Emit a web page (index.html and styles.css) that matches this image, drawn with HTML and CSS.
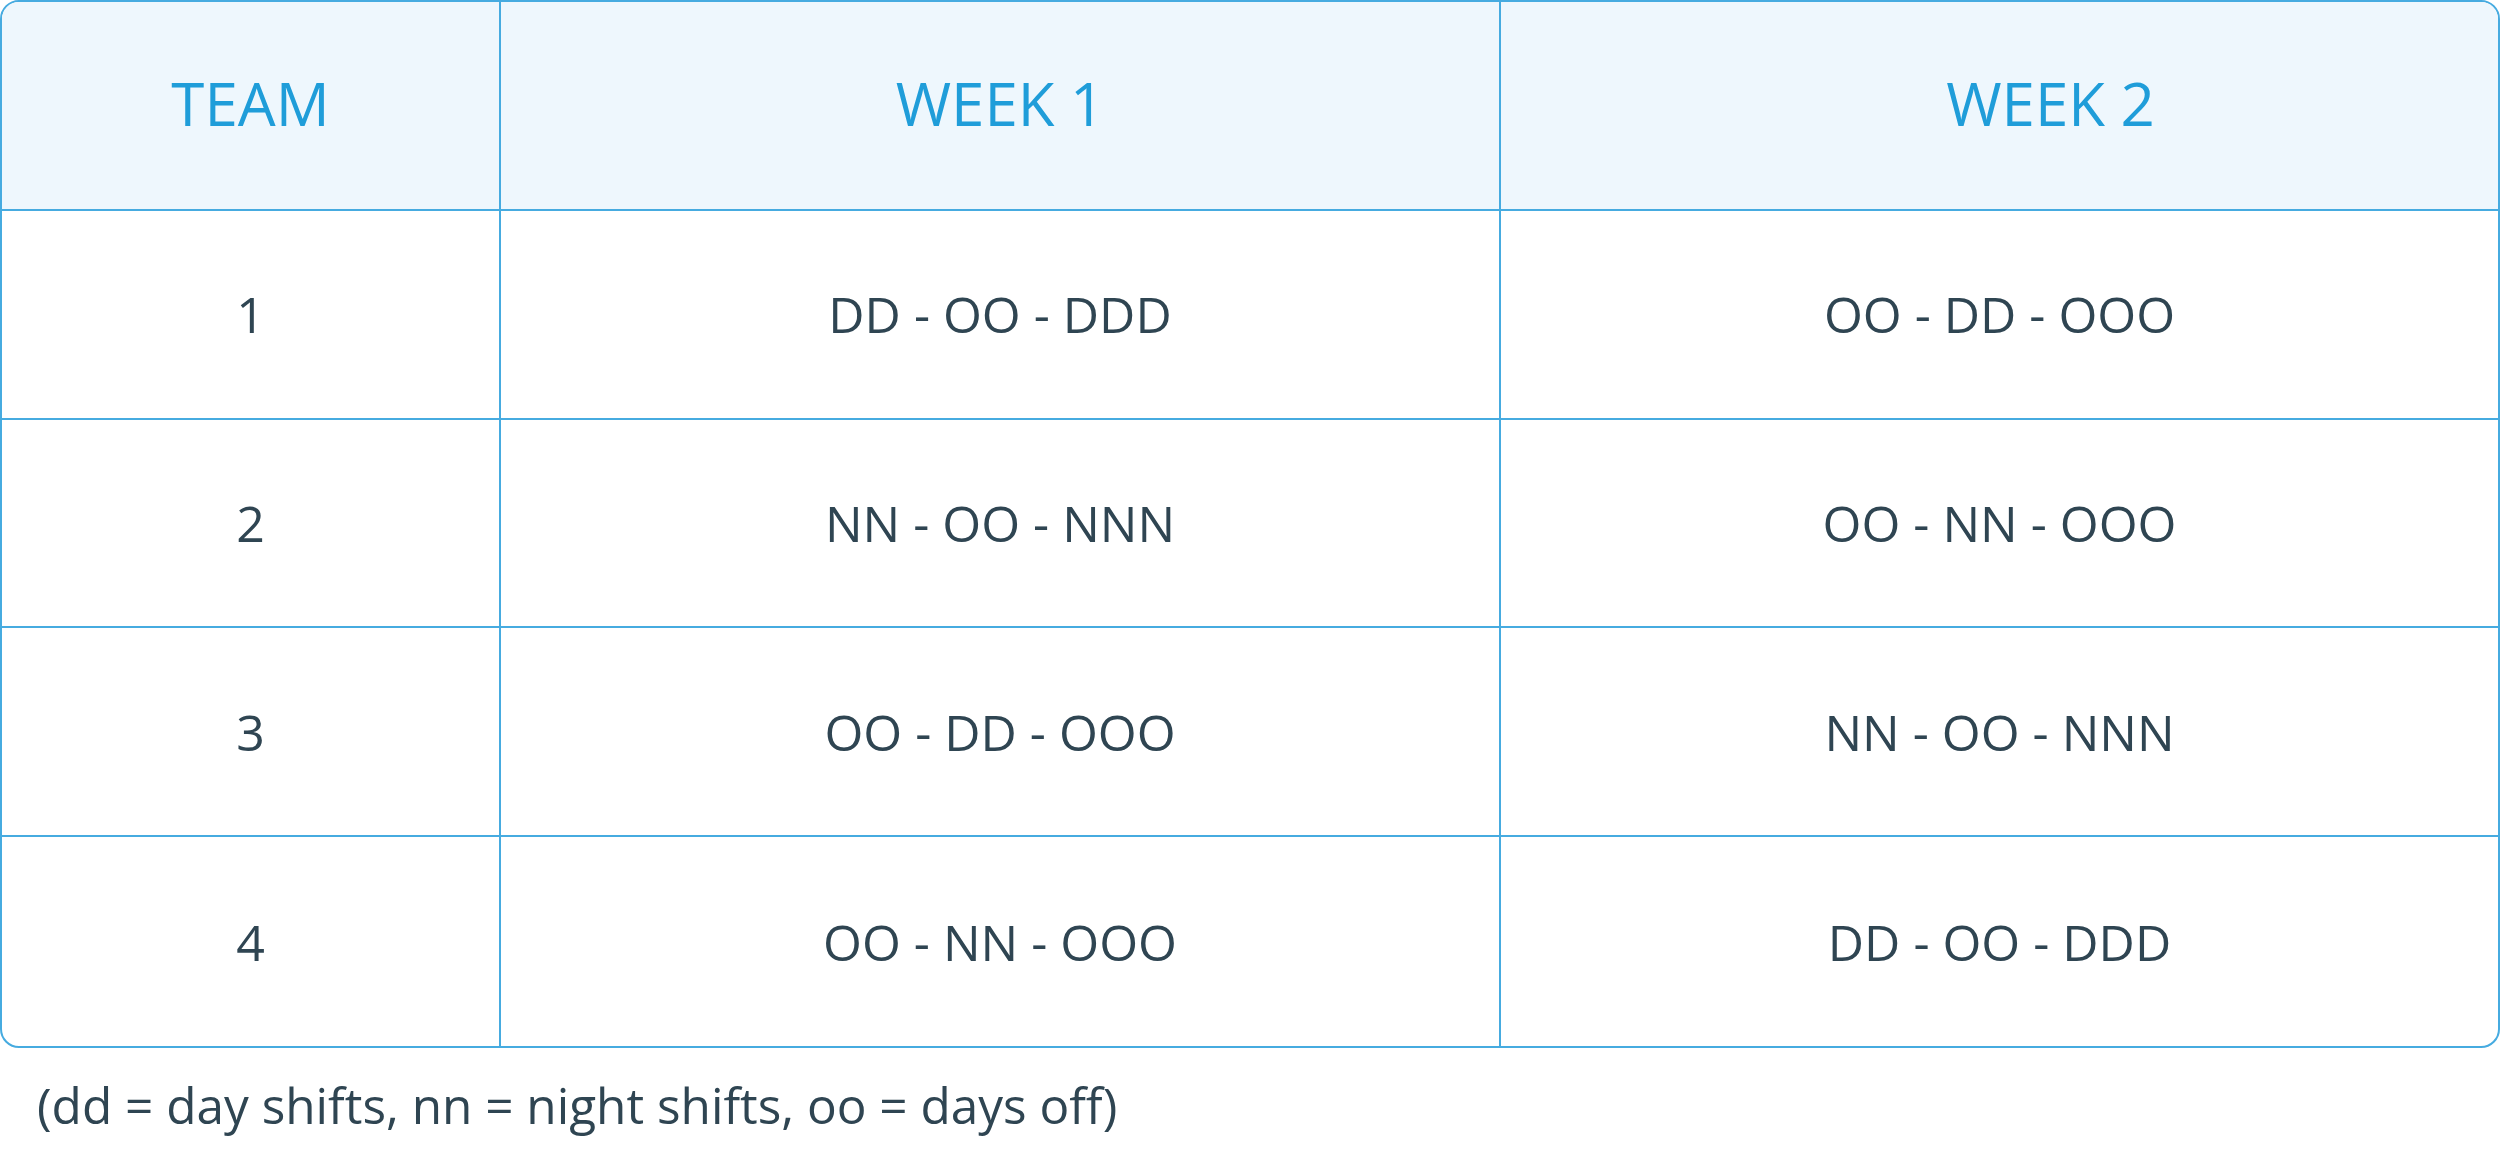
FILE: index.html
```html
<!DOCTYPE html>
<html lang="en">
<head>
<meta charset="utf-8">
<title>Team shift schedule</title>
<link rel="stylesheet" href="styles.css">
</head>
<body>
<div class="schedule" role="table">
  <div class="cell head" role="columnheader">TEAM</div>
  <div class="cell head" role="columnheader">WEEK 1</div>
  <div class="cell head last shifted" role="columnheader">WEEK 2</div>

  <div class="cell" role="cell">1</div>
  <div class="cell" role="cell">DD - OO - DDD</div>
  <div class="cell last" role="cell">OO - DD - OOO</div>

  <div class="cell" role="cell">2</div>
  <div class="cell" role="cell">NN - OO - NNN</div>
  <div class="cell last" role="cell">OO - NN - OOO</div>

  <div class="cell" role="cell">3</div>
  <div class="cell" role="cell">OO - DD - OOO</div>
  <div class="cell last" role="cell">NN - OO - NNN</div>

  <div class="cell bottom" role="cell">4</div>
  <div class="cell bottom" role="cell">OO - NN - OOO</div>
  <div class="cell bottom last" role="cell">DD - OO - DDD</div>
</div>
<p class="legend">(dd = day shifts, nn = night shifts, oo = days off)</p>
</body>
</html>
```

FILE: styles.css
```css
html, body {
  margin: 0;
  padding: 0;
  background: #ffffff;
}

body {
  font-family: "Open Sans", "Liberation Sans", sans-serif;
  color: #2f4552;
}

.schedule {
  box-sizing: border-box;
  width: 2500px;
  height: 1048px;
  border: 2px solid #46abe0;
  border-radius: 19px;
  overflow: hidden;
  display: grid;
  grid-template-columns: 499px 1000px 1fr;
  grid-template-rows: repeat(5, 1fr);
}

.cell {
  display: flex;
  align-items: center;
  justify-content: center;
  border-right: 2px solid #46abe0;
  border-bottom: 2px solid #46abe0;
  font-size: 50px;
  line-height: 1;
  color: #2f4552;
}

.cell.last {
  border-right: none;
}

.cell.bottom {
  border-bottom: none;
}

.cell.head {
  box-sizing: border-box;
  padding-bottom: 5px;
  background: #eef7fd;
  color: #1f9dd9;
  font-size: 60px;
}

.cell.head.shifted {
  padding-left: 102px;
}

.legend {
  margin: 23px 0 0 0;
  padding-left: 37px;
  font-size: 49.5px;
  line-height: 68px;
  color: #2f4552;
}
```
